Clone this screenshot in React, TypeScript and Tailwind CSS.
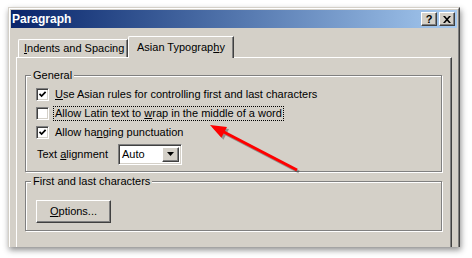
import React from "react";

const raised =
  "border border-t-white border-l-white border-r-[#404040] border-b-[#404040] shadow-[inset_-1px_-1px_0_#808080]";

function Check({ checked }: { checked: boolean }) {
  return (
    <span className="flex h-[13px] w-[13px] shrink-0 items-center justify-center border border-t-[#808080] border-l-[#808080] border-r-white border-b-white bg-white shadow-[inset_1px_1px_0_#404040,inset_-1px_-1px_0_#d4d0c8]">
      {checked && (
        <svg width="9" height="9" viewBox="0 0 9 9">
          <path d="M1.5 3.8 L3.6 6 L7.6 1.8" fill="none" stroke="#000" strokeWidth="1.7" />
        </svg>
      )}
    </span>
  );
}

function Row({ checked, children, focused }: { checked: boolean; children: React.ReactNode; focused?: boolean }) {
  return (
    <div className="flex h-[19px] items-center">
      <Check checked={checked} />
      <span
        className={
          "ml-[5px] px-[1px] leading-[13px] " +
          (focused ? "outline outline-1 outline-dotted outline-[#000]" : "")
        }
      >
        {children}
      </span>
    </div>
  );
}

export default function App() {
  return (
    <div className="relative h-[258px] w-[472px] overflow-hidden bg-white font-['Liberation_Sans',Arial,sans-serif] text-[11px] text-black">
      {/* window */}
      <div className="ml-[8px] mt-[7px] h-[240px] w-[452px] overflow-hidden border-x border-t border-l-[#d4d0c8] border-t-[#d4d0c8] border-r-[#404040] bg-[#d4d0c8] shadow-[1px_3px_6px_rgba(0,0,0,0.45)]">
        <div className="flex h-full flex-col border-x border-t border-l-white border-t-white border-r-[#808080] px-[1px] pt-[1px]">
          {/* title bar */}
          <div className="flex h-[18px] items-center justify-between bg-gradient-to-r from-[#0a246a] to-[#a6caf0] pl-[1px] pr-[2px]">
            <span className="text-[12px] font-bold leading-none text-white">Paragraph</span>
            <div className="flex gap-[2px]">
              <span className={"flex h-[14px] w-[16px] items-center justify-center bg-[#d4d0c8] text-[11px] font-bold leading-none " + raised}>
                ?
              </span>
              <span className={"flex h-[14px] w-[16px] items-center justify-center bg-[#d4d0c8] " + raised}>
                <svg width="8" height="7" viewBox="0 0 8 7">
                  <path d="M0 0h2l2 2.2L6 0h2L5 3.5 8 7H6L4 4.8 2 7H0l3-3.5z" fill="#000" />
                </svg>
              </span>
            </div>
          </div>

          {/* body */}
          <div className="flex flex-1 flex-col px-[5px] pt-[8px]">
            {/* tabs */}
            <div className="relative z-10 flex items-end pl-[2px]">
              <div className="flex h-[18px] w-[110px] items-center rounded-tl-[2px] border-l border-t border-l-white border-t-white border-r border-r-[#404040] pl-[5px] shadow-[inset_-1px_0_0_#808080]">
                <span className="leading-[13px]">
                  <span className="underline">I</span>ndents and Spacing
                </span>
              </div>
              <div className="-mb-[1px] flex h-[22px] w-[106px] items-start rounded-tl-[2px] border-l border-t border-l-white border-t-white border-r border-r-[#404040] bg-[#d4d0c8] pl-[8px] pt-[4px] shadow-[inset_-1px_0_0_#808080]">
                <span className="leading-[13px]">
                  Asian Typograp<span className="underline">h</span>y
                </span>
              </div>
            </div>

            {/* panel */}
            <div className="flex flex-1 flex-col border-l border-t border-r border-l-white border-t-white border-r-[#404040] pl-[8px] pr-[9px] pt-[11px] shadow-[inset_-1px_0_0_#808080]">
              <fieldset className="border border-[#808080] pb-[6px] pl-[10px] pt-[3px] shadow-[inset_1px_1px_0_#fff,1px_1px_0_#fff]">
                <legend className="-ml-[5px] bg-[#d4d0c8] px-[2px] leading-[13px]">General</legend>
                <Row checked>
                  <span className="underline">U</span>se Asian rules for controlling first and last characters
                </Row>
                <Row checked={false} focused>
                  Allow Latin text to <span className="underline">w</span>rap in the middle of a word
                </Row>
                <Row checked>
                  Allow ha<span className="underline">n</span>ging punctuation
                </Row>
                <div className="mt-[1px] flex h-[22px] items-center">
                  <span className="ml-[1px] w-[81px] leading-[13px]">
                    Text <span className="underline">a</span>lignment
                  </span>
                  <div className="flex h-[21px] w-[64px] items-center border border-t-[#808080] border-l-[#808080] border-r-white border-b-white bg-white shadow-[inset_1px_1px_0_#404040,inset_-1px_-1px_0_#d4d0c8] pl-[3px] pr-[2px]">
                    <span className="flex-1 leading-[13px]">Auto</span>
                    <span className={"flex h-[15px] w-[17px] items-center justify-center bg-[#d4d0c8] " + raised}>
                      <svg width="7" height="4" viewBox="0 0 7 4">
                        <path d="M0 0h7L3.5 4z" fill="#000" />
                      </svg>
                    </span>
                  </div>
                </div>
              </fieldset>

              <fieldset className="mt-[3px] border border-[#808080] pb-[7px] pl-[10px] pt-[12px] shadow-[inset_1px_1px_0_#fff,1px_1px_0_#fff]">
                <legend className="-ml-[5px] bg-[#d4d0c8] px-[2px] leading-[13px]">First and last characters</legend>
                <button className={"flex h-[23px] w-[75px] items-center justify-center bg-[#d4d0c8] " + raised}>
                  <span className="leading-[13px]">
                    <span className="underline">O</span>ptions...
                  </span>
                </button>
              </fieldset>
            </div>
          </div>
        </div>
      </div>

      {/* annotation arrow */}
      <svg className="pointer-events-none absolute left-0 top-0" width="472" height="258">
        <g transform="translate(2 2)" opacity="0.3">
          <line x1="297" y1="170" x2="222" y2="131" stroke="#000" strokeWidth="3" />
          <polygon points="210,125 227,127 221.4,137.7" fill="#000" />
        </g>
        <line x1="297" y1="170" x2="222" y2="131" stroke="#ff0000" strokeWidth="3" />
        <polygon points="210,125 227,127 221.4,137.7" fill="#ff0000" />
      </svg>
    </div>
  );
}
